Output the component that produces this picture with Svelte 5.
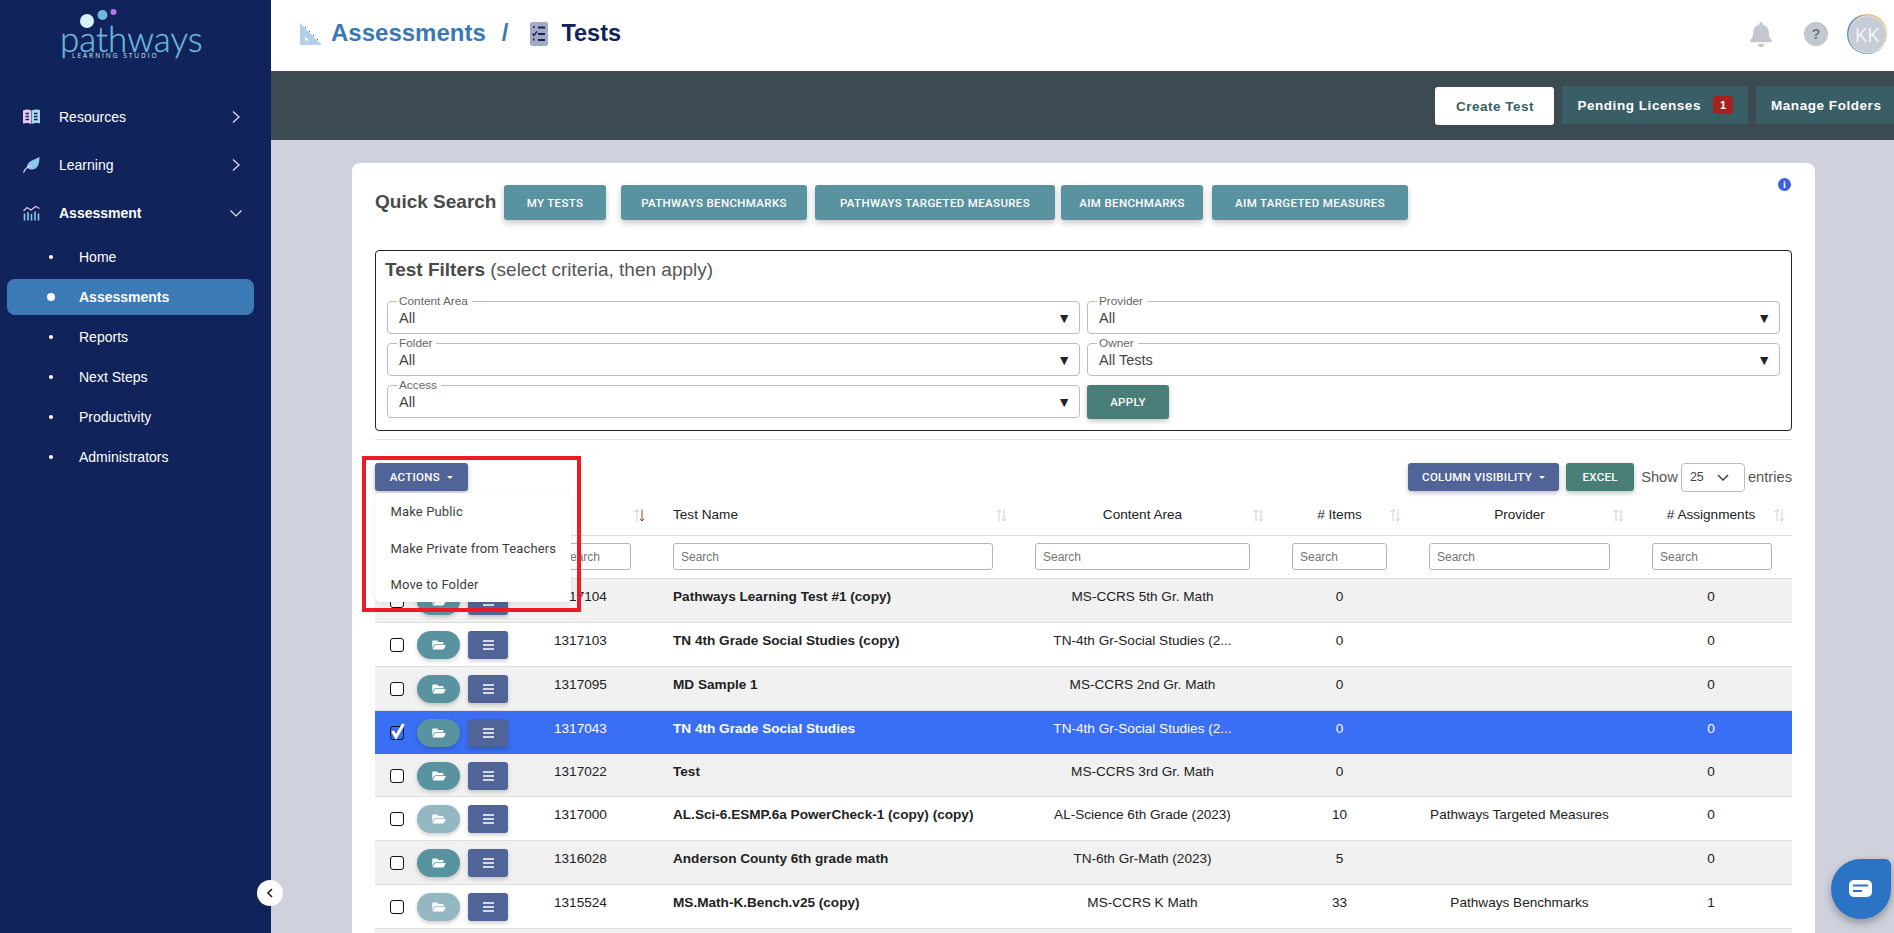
<script>
  const nav = [
    { label: 'Resources', icon: 'book' },
    { label: 'Learning', icon: 'leaf' },
    { label: 'Assessment', icon: 'chart', open: true }
  ];
  const subs = ['Home', 'Assessments', 'Reports', 'Next Steps', 'Productivity', 'Administrators'];
  const quick = ['Pathways Benchmarks', 'Pathways Targeted Measures', 'AIM Benchmarks', 'AIM Targeted Measures'];
  const filters = [
    { legend: 'Content Area', value: 'All' },
    { legend: 'Provider', value: 'All' },
    { legend: 'Folder', value: 'All' },
    { legend: 'Owner', value: 'All Tests' },
    { legend: 'Access', value: 'All' }
  ];
  const heads = ['ID', 'Test Name', 'Content Area', '# Items', 'Provider', '# Assignments'];
  const rows = [
    { id: '1317104', name: 'Pathways Learning Test #1 (copy)', area: 'MS-CCRS 5th Gr. Math', items: 0, provider: '', asg: 0 },
    { id: '1317103', name: 'TN 4th Grade Social Studies (copy)', area: 'TN-4th Gr-Social Studies (2...', items: 0, provider: '', asg: 0 },
    { id: '1317095', name: 'MD Sample 1', area: 'MS-CCRS 2nd Gr. Math', items: 0, provider: '', asg: 0 },
    { id: '1317043', name: 'TN 4th Grade Social Studies', area: 'TN-4th Gr-Social Studies (2...', items: 0, provider: '', asg: 0, selected: true, short: true },
    { id: '1317022', name: 'Test', area: 'MS-CCRS 3rd Gr. Math', items: 0, provider: '', asg: 0, short: true },
    { id: '1317000', name: 'AL.Sci-6.ESMP.6a PowerCheck-1 (copy) (copy)', area: 'AL-Science 6th Grade (2023)', items: 10, provider: 'Pathways Targeted Measures', asg: 0, faded: true },
    { id: '1316028', name: 'Anderson County 6th grade math', area: 'TN-6th Gr-Math (2023)', items: 5, provider: '', asg: 0 },
    { id: '1315524', name: 'MS.Math-K.Bench.v25 (copy)', area: 'MS-CCRS K Math', items: 33, provider: 'Pathways Benchmarks', asg: 1, faded: true }
  ];
  const folderPath = 'M572.694 292.093L500.27 416.248A63.997 63.997 0 0 1 444.989 448H45.025c-18.523 0-30.064-20.093-20.731-36.093l72.424-124.155A64 64 0 0 1 152 256h399.964c18.523 0 30.064 20.093 20.73 36.093zM152 224h328v-48c0-26.51-21.49-48-48-48H272l-64-64H48C21.49 64 0 85.49 0 112v278.046l69.077-118.418C86.214 242.25 117.989 224 152 224z';
</script>

<div class="shell">
  <aside class="side">
    <div class="logo">
      <svg class="dots" width="60" height="30" viewBox="0 0 60 30">
        <circle cx="27" cy="21" r="7" fill="#d5f3fb" />
        <circle cx="42.5" cy="15" r="5" fill="#6db9de" />
        <circle cx="53.5" cy="12" r="3" fill="#b877e6" />
      </svg>
      <div class="logo-word">pathways</div>
      <div class="logo-sub">LEARNING STUDIO</div>
    </div>

    <nav class="menu">
      {#each nav as n}
        <div class="top" class:open={n.open}>
          <span class="ticon">
            {#if n.icon === 'book'}
              <svg width="17" height="16" viewBox="0 0 17 16">
                <path d="M0 1.5 C3 0 6 .5 8 1.5 V15 C6 14 3 13.5 0 14.5Z" fill="#e9c9f1" />
                <path d="M17 1 C14 0 11 .5 8.5 1.5 V15 C11 14 14 13.8 17 14.5Z" fill="#a9d5ee" />
                <path d="M2.5 4.5h3.5M2.5 7.5h3.5M2.5 10.5h3.5M11 4.5h3.5M11 7.5h3.5M11 10.5h3.5" stroke="#10235a" stroke-width="1.6" />
              </svg>
            {:else if n.icon === 'leaf'}
              <svg width="17" height="16" viewBox="0 0 17 16">
                <path d="M16.5 0 C16.5 8 14 13 8 12.5 C5.5 12.2 4 11 3.8 9.5 C5 4 11 3 16.5 0Z" fill="#8cc8ea" />
                <path d="M.5 15.5 C2 11 5 9.5 9 8.8" stroke="#e6c4ef" stroke-width="1.3" fill="none" />
              </svg>
            {:else}
              <svg width="17" height="16" viewBox="0 0 17 16">
                <path d="M.5 6 L4 2.5 L8 5 L12.5 1.5 L16.5 3.5" stroke="#e6c4ef" stroke-width="1.2" fill="none" />
                <path d="M1.5 8.5v7M5 7v8.500M8.500 9v6.500M12 6.500v9M15.500 8.500v7" stroke="#8cc8ea" stroke-width="1.6" />
              </svg>
            {/if}
          </span>
          <span class="tlabel">{n.label}</span>
          <svg class="chev" width="12" height="12" viewBox="0 0 12 12">
            {#if n.open}
              <path d="M.5 3.500 L6 9 L11.500 3.500" stroke="#dfe6f2" stroke-width="1.200" fill="none" />
            {:else}
              <path d="M3 .5 L9 6 L3 11.500" stroke="#dfe6f2" stroke-width="1.200" fill="none" />
            {/if}
          </svg>
        </div>
      {/each}
      <div class="subs">
        {#each subs as s}
          <div class="sub" class:active={s === 'Assessments'}>
            <span class="bullet"></span>{s}
          </div>
        {/each}
      </div>
    </nav>
    <button class="collapse" aria-label="Collapse">
      <svg width="8" height="10" viewBox="0 0 8 10"><path d="M6 1 L2 5 L6 9" stroke="#222" stroke-width="1.600" fill="none" /></svg>
    </button>
  </aside>

  <main class="main">
    <header class="head">
      <div class="crumbs">
        <svg class="c1" width="24" height="24" viewBox="0 0 24 24">
          <path d="M1 1 L23 23 H2.500 Q1 23 1 21.500Z" fill="#b3cfe8" />
          <path d="M6 14.500 L10 18.500 H6Z" fill="#fff" />
          <path d="M6 6 l1 -1 M10 10 l1 -1 M14 14 l1 -1 M18 18 l1 -1" stroke="#3a78b4" stroke-width="1" />
        </svg>
        <span class="c-link">Assessments</span>
        <span class="c-sep">/</span>
        <svg class="c2" width="18" height="24" viewBox="0 0 18 24">
          <rect width="18" height="24" rx="2.500" fill="#a2a9c2" />
          <path d="M3 5h1.500M3 17.500h1.500M8 5.500h7M8 12h7M8 18h7" stroke="#10235a" stroke-width="1.800" />
          <path d="M2.500 11.500 L4 13.500 L7 9.500" stroke="#10235a" stroke-width="1.300" fill="none" />
        </svg>
        <span class="c-cur">Tests</span>
      </div>
      <div class="head-icons">
        <svg width="22" height="25" viewBox="0 0 448 512"><path fill="#c3c8d0" d="M224 512c35.32 0 63.97-28.65 63.97-64H160.03c0 35.35 28.65 64 63.97 64zm215.39-149.71c-19.32-20.76-55.47-51.99-55.47-154.29 0-77.7-54.48-139.9-127.94-155.16V32c0-17.67-14.32-32-31.98-32s-31.98 14.33-31.98 32v20.84C118.56 68.1 64.08 130.3 64.08 208c0 102.3-36.15 133.53-55.47 154.29-6 6.45-8.66 14.16-8.61 21.71.11 16.4 12.98 32 32.1 32h383.8c19.12 0 32-15.6 32.1-32 .05-7.55-2.61-15.27-8.61-21.71z" /></svg>
        <span class="help">?</span>
        <span class="avatar"><span>KK</span></span>
      </div>
    </header>

    <div class="bar">
      <button class="b-create">Create Test</button>
      <button class="b-dark">Pending Licenses <span class="badge">1</span></button>
      <button class="b-dark last">Manage Folders</button>
    </div>

    <div class="content">
      <section class="card">
        <span class="info">i</span>
        <div class="quick">
          <span class="q-label">Quick Search</span>
          <button class="q mine">MY TESTS</button>
          {#each quick as q}
            <button class="q">{q.toUpperCase()}</button>
          {/each}
        </div>

        <div class="filters">
          <div class="f-title"><b>Test Filters</b> (select criteria, then apply)</div>
          <div class="f-grid">
            {#each filters as f}
              <fieldset class="field">
                <legend>{f.legend}</legend>
                <span class="f-val">{f.value}</span>
                <span class="f-arrow">▼</span>
              </fieldset>
            {/each}
            <div class="apply-cell"><button class="apply">APPLY</button></div>
          </div>
        </div>
        <hr class="rule" />

        <div class="tools">
          <div class="drop-wrap">
            <button class="btn indigo">ACTIONS <i class="caret"></i></button>
            <div class="dropdown">
              <div>Make Public</div>
              <div>Make Private from Teachers</div>
              <div>Move to Folder</div>
            </div>
            <div class="redbox"></div>
          </div>
          <div class="tools-right">
            <button class="btn indigo">COLUMN VISIBILITY <i class="caret"></i></button>
            <button class="btn green">EXCEL</button>
            <span class="show">Show</span>
            <span class="len">25
              <svg width="12" height="7" viewBox="0 0 12 7"><path d="M1 1 L6 6 L11 1" stroke="#444" stroke-width="1.500" fill="none" /></svg>
            </span>
            <span class="show">entries</span>
          </div>
        </div>

        <table class="tbl">
          <colgroup>
            <col class="w0" /><col class="w1" /><col class="w2" /><col class="w3" /><col class="w4" /><col class="w5" /><col class="w6" />
          </colgroup>
          <thead>
            <tr class="hr1">
              <th></th>
              {#each heads as h, i}
                <th class:left={i < 2}>
                  {h}
                  <svg class="sort" width="11" height="13" viewBox="0 0 11 13">
                    <path d="M3 12.500V1M.8 3.200 L3 1 L5.200 3.200" stroke="#cfcfcf" stroke-width="1" fill="none" />
                    <path d="M8 .5V12M5.800 9.800 L8 12 L10.200 9.800" stroke={i === 0 ? '#8a4b2a' : '#cfcfcf'} stroke-width="1" fill="none" />
                  </svg>
                </th>
              {/each}
            </tr>
            <tr class="hr2">
              <th></th>
              {#each heads as h}
                <th><input placeholder="Search" /></th>
              {/each}
            </tr>
          </thead>
          <tbody>
            {#each rows as r, i}
              <tr class:odd={i % 2 === 0} class:sel={r.selected} class:short={r.short}>
                <td class="acts">
                  <div class="acts-in">
                    <span class="cb" class:checked={r.selected}>
                      {#if r.selected}
                        <svg width="16" height="18" viewBox="0 0 16 18"><path d="M2.500 9 L6 15 L13.500 2" stroke="#fff" stroke-width="3" fill="none" /></svg>
                      {/if}
                    </span>
                    <span class="folder" class:faded={r.faded}>
                      <svg width="14" height="12" viewBox="0 0 576 512"><path fill="#fff" d={folderPath} /></svg>
                    </span>
                    <span class="burger">
                      <svg width="11" height="10" viewBox="0 0 11 10"><path d="M0 1h11M0 5h11M0 9h11" stroke="#fff" stroke-width="1.500" /></svg>
                    </span>
                  </div>
                </td>
                <td>{r.id}</td>
                <td class="nm">{r.name}</td>
                <td class="ctr">{r.area}</td>
                <td class="ctr">{r.items}</td>
                <td class="ctr">{r.provider}</td>
                <td class="ctr">{r.asg}</td>
              </tr>
            {/each}
            <tr class="odd tail"><td colspan="7"></td></tr>
          </tbody>
        </table>
      </section>
    </div>
  </main>

  <button class="chat" aria-label="Chat">
    <svg width="24" height="18" viewBox="0 0 24 18">
      <rect width="23" height="17" rx="5" fill="#fff" />
      <path d="M4 5.500h15M4 11h9" stroke="#2b74c5" stroke-width="2" />
    </svg>
  </button>
</div>

<style>
  :global(body) { margin: 0; overflow: hidden; background: #cfd1dc; }
  .shell { display: flex; width: 1894px; height: 933px; overflow: hidden; font-family: "Liberation Sans", Arial, sans-serif; position: relative; }
  button { font-family: inherit; border: 0; cursor: pointer; }

  .side { width: 271px; flex: none; background: #10235a; color: #fff; position: relative; z-index: 2; }
  .logo { position: relative; height: 61px; text-align: center; width: 271px; }
  .dots { position: absolute; left: 60px; top: 0; }
  .logo-word { position: absolute; left: 60px; top: 24px; font: 300 35px/28px Lato, "Open Sans", sans-serif; color: #6db9de; -webkit-text-stroke: .3px #6db9de; }
  .logo-sub { position: absolute; left: 72px; top: 52px; font: 400 6.500px/7px "Open Sans", sans-serif; letter-spacing: 2px; color: #d9eefa; white-space: nowrap; }

  .menu { padding-top: 32px; }
  .top { display: flex; align-items: center; height: 48px; padding-left: 23px; font-size: 14px; position: relative; }
  .ticon { width: 36px; display: flex; }
  .tlabel { flex: 1; }
  .top.open .tlabel { font-weight: 700; }
  .chev { position: absolute; left: 230px; }
  .subs { padding: 0 17px 0 7px; margin-top: 2px; }
  .sub { height: 36px; margin-bottom: 4px; display: flex; align-items: center; padding-left: 72px; position: relative; font-size: 14px; border-radius: 8px; }
  .sub .bullet { position: absolute; left: 42px; top: 16px; width: 4px; height: 4px; border-radius: 50%; background: #fff; }
  .sub.active { background: #3c7ab5; font-weight: 700; }
  .sub.active .bullet { width: 8px; height: 8px; left: 40px; top: 14px; }
  .collapse { position: absolute; left: 257px; top: 880px; width: 26px; height: 26px; border-radius: 50%; background: #fff; padding: 0; display: flex; align-items: center; justify-content: center; }

  .main { flex: 1; min-width: 0; display: flex; flex-direction: column; }
  .head { height: 71px; box-sizing: border-box; padding-bottom: 5px; background: #fff; display: flex; align-items: center; justify-content: space-between; flex: none; }
  .crumbs { display: flex; align-items: center; padding-left: 28px; }
  .c-link { font-size: 24px; font-weight: 700; color: #3a78b4; margin-left: 8px; }
  .c-sep { font-size: 24px; font-weight: 700; color: #3a78b4; margin-left: 16px; }
  .c2 { margin-left: 22px; }
  .c-cur { font-size: 23.500px; font-weight: 700; color: #10235a; margin-left: 13px; }
  .c1, .c2 { position: relative; top: 1px; }
  .head-icons { display: flex; align-items: center; padding-right: 7px; position: relative; top: 1px; }
  .help { width: 24px; height: 24px; border-radius: 50%; background: #c3c8d0; color: #6d7480; font-weight: 700; font-size: 14px; display: flex; align-items: center; justify-content: center; margin-left: 32px; }
  .avatar { width: 40px; height: 40px; border-radius: 50%; margin-left: 19px; background: conic-gradient(#e0b75a 0 30%, #5c90b4 45% 85%, #e0b75a); display: flex; align-items: center; justify-content: center; }
  .avatar span { width: 37px; height: 37px; border-radius: 50%; background: #c7cdd6; color: #f4f5f7; font: 400 20px/37px "Open Sans", sans-serif; text-align: center; box-shadow: 0 0 0 .5px #fff; }

  .bar { height: 69px; background: #3c4a52; display: flex; justify-content: flex-end; align-items: flex-start; padding-top: 15px; box-sizing: border-box; flex: none; }
  .b-create { width: 119px; height: 38px; margin-top: 1px; background: #fff; color: #395e66; font-weight: 700; font-size: 13.500px; border-radius: 3px; margin-right: 8px; letter-spacing: .5px; }
  .b-dark { height: 38px; background: #395e66; color: #fff; font-weight: 700; font-size: 13.500px; padding: 0 15px; margin-right: 8px; display: flex; align-items: center; letter-spacing: .55px; white-space: nowrap; }
  .b-dark.last { margin-right: 0; width: 138px; justify-content: flex-start; flex: none; }
  .badge { width: 20px; height: 18px; border-radius: 4px; background: #a82020; font-size: 11px; line-height: 18px; text-align: center; margin-left: 12px; letter-spacing: 0; }

  .content { flex: 1; padding: 23px 79px 0 81px; min-height: 0; }
  .card { background: #fff; border-radius: 8px 8px 0 0; width: 1463px; box-sizing: border-box; padding: 22px 23px 0 23px; position: relative; min-height: 800px; }
  .info { position: absolute; right: 24px; top: 15px; width: 13px; height: 13px; border-radius: 50%; background: #3b5fe0; color: #fff; font: 700 10px/13px "Liberation Serif", serif; text-align: center; }

  .quick { display: flex; align-items: center; height: 35px; }
  .q-label { font-size: 19px; font-weight: 700; color: #4a4a4a; width: 129px; flex: none; white-space: nowrap; position: relative; top: -1px; }
  .q { height: 35px; background: #58939f; color: #fff; font: 500 11.500px Roboto, sans-serif; letter-spacing: .35px; border-radius: 3px; box-shadow: 0 3px 6px rgba(0,0,0,.22); padding: 0; margin-right: 8px; white-space: nowrap; flex: none; width: 186px; }
  .q:nth-of-type(3) { width: 240px; margin-right: 6px; }
  .q:nth-of-type(4) { width: 142px; margin-right: 9px; }
  .q:nth-of-type(5) { width: 196px; }
  .q.mine { width: 102px; margin-right: 15px; }

  .filters { margin-top: 30px; border: 1px solid #222; border-radius: 4px; height: 181px; box-sizing: border-box; padding: 6px 10px 0 11px; }
  .f-title { font-size: 19px; line-height: 25px; color: #555; margin-left: -2px; }
  .f-title b { color: #4a4a4a; }
  .f-grid { display: grid; grid-template-columns: 693px 693px; column-gap: 7px; grid-auto-rows: 39px; row-gap: 3px; margin-top: 13px; }
  .field { margin: 0; padding: 0 11px; border: 1px solid #bdbdbd; border-radius: 4px; position: relative; box-sizing: border-box; height: 39px; min-width: 0; }
  .field legend { font-size: 11.800px; line-height: 12px; color: #666; padding: 0 4px 0 2px; margin-left: -2px; }
  .f-val { font-size: 14.500px; color: #444; display: block; line-height: 17px; margin-top: 3px; }
  .f-arrow { position: absolute; right: 8px; top: 3px; font-size: 14px; line-height: 17px; color: #222; }
  .apply-cell { padding-top: 6px; }
  .apply { width: 82px; height: 34px; background: #497e78; color: #fff; font: 500 11.500px Roboto, sans-serif; border-radius: 3px; box-shadow: 0 2px 5px rgba(0,0,0,.25); letter-spacing: .3px; }

  .rule { border: 0; border-top: 1px solid #e4e4e4; margin: 8px 0 0; }

  .tools { display: flex; justify-content: space-between; align-items: flex-start; margin-top: 23px; height: 28px; position: relative; z-index: 3; }
  .drop-wrap { position: relative; }
  .btn { height: 28px; color: #fff; font: 500 11.500px Roboto, sans-serif; border-radius: 3px; box-shadow: 0 2px 5px rgba(0,0,0,.25); letter-spacing: .3px; white-space: nowrap; }
  .drop-wrap .btn { width: 93px; padding: 0; }
  .indigo { background: #506497; }
  .green { background: #497e78; }
  .caret { display: inline-block; width: 0; height: 0; border: 3px solid transparent; border-top: 3px solid #fff; border-bottom: 0; vertical-align: 2px; margin-left: 4px; }
  .dropdown { position: absolute; left: 0; top: 30px; width: 196px; height: 109px; box-sizing: border-box; background: #fff; border-radius: 6px; box-shadow: 0 2px 6px rgba(0,0,0,.08); padding-top: 1px; font: 400 13px Roboto, sans-serif; color: #3d3d3d; letter-spacing: .14px; z-index: 1; }
  .dropdown div { height: 36.500px; line-height: 35px; padding-left: 15.500px; white-space: nowrap; }
  .redbox { position: absolute; left: -13px; top: -7px; width: 211px; height: 148px; border: 4px solid #ed1c24; z-index: 2; pointer-events: none; }
  .tools-right { display: flex; align-items: center; height: 28px; }
  .tools-right .btn.indigo { width: 151px; padding: 0; margin-right: 7px; }
  .tools-right .btn.green { width: 68px; padding: 0; margin-right: 7px; }
  .show { font-size: 14.700px; color: #555; }
  .len { width: 64px; height: 29px; box-sizing: border-box; border: 1px solid #bbb; border-radius: 4px; margin: 0 3px; display: flex; align-items: center; justify-content: space-between; padding: 0 15px 0 8px; font-size: 12.500px; color: #444; }

  .tbl { table-layout: fixed; width: 1417px; border-collapse: collapse; font-size: 13.600px; color: #222; }
  .w0 { width: 167px; } .w1 { width: 119px; } .w2 { width: 362px; } .w3 { width: 257px; } .w4 { width: 137px; } .w5 { width: 223px; } .w6 { width: 152px; }
  .hr1 th { height: 44px; box-sizing: border-box; border-bottom: 1px solid #dedede; font-weight: 400; position: relative; text-align: center; padding: 4px 30px 0 12px; white-space: nowrap; }
  .hr1 th:last-child { padding-right: 22px; }
  .hr1 th.left { text-align: left; }
  .sort { position: absolute; right: 16px; top: 18px; }
  .hr1 th:last-child .sort { right: 7px; }
  .hr2 th { height: 43px; box-sizing: border-box; border-bottom: 1px solid #dedede; padding: 0 30px 0 12px; text-align: left; font-weight: 400; }
  .hr2 th:last-child { padding-right: 20px; }
  input { width: 100%; height: 27px; box-sizing: border-box; border: 1px solid #b5b5b5; border-radius: 3px; padding: 0 7px; font: 400 12px "Liberation Sans", sans-serif; background: #fff; outline: 0; display: block; }
  input::placeholder { color: #757575; }

  tbody tr { height: 44px; }
  tbody td { box-sizing: border-box; height: 44px; border-bottom: 1px solid #dedede; padding: 10px 12px 0; vertical-align: top; line-height: 16px; white-space: nowrap; overflow: hidden; }
  tbody tr.short { height: 43px; }
  tbody tr.short td { height: 43px; }
  tbody tr.odd td { background: #f1f1f1; }
  tbody tr.sel td { background: #3a6ef5; color: #fff; border-bottom-color: #3a6ef5; }
  td.nm { font-weight: 700; }
  td.ctr { text-align: center; padding-right: 30px; }
  td.ctr:last-child { padding-right: 22px; }
  tbody td.acts { padding: 8px 0 0 15px; overflow: visible; }
  .acts-in { display: flex; align-items: center; }
  .cb { width: 12px; height: 12px; border: 1px solid #111; border-radius: 3px; background: #fff; position: relative; flex: none; margin-right: 13px; }
  .cb.checked { background: transparent; }
  .cb svg { position: absolute; left: -1px; top: -5px; }
  .folder { width: 43px; height: 28px; border-radius: 14px; background: #58939f; box-shadow: 0 2px 4px rgba(0,0,0,.2); display: flex; align-items: center; justify-content: center; margin-right: 8px; flex: none; }
  .folder.faded { background: #94b8c1; }
  .burger { width: 40px; height: 28px; border-radius: 3px; background: #506497; box-shadow: 0 2px 4px rgba(0,0,0,.2); display: flex; align-items: center; justify-content: center; flex: none; }

  .chat { position: absolute; left: 1831px; top: 859px; width: 60px; height: 60px; padding: 0; background: #2b74c5; border-radius: 50% 6px 50% 50%; box-shadow: 0 4px 8px rgba(0,0,0,.3); display: flex; align-items: center; justify-content: center; z-index: 5; }
</style>
